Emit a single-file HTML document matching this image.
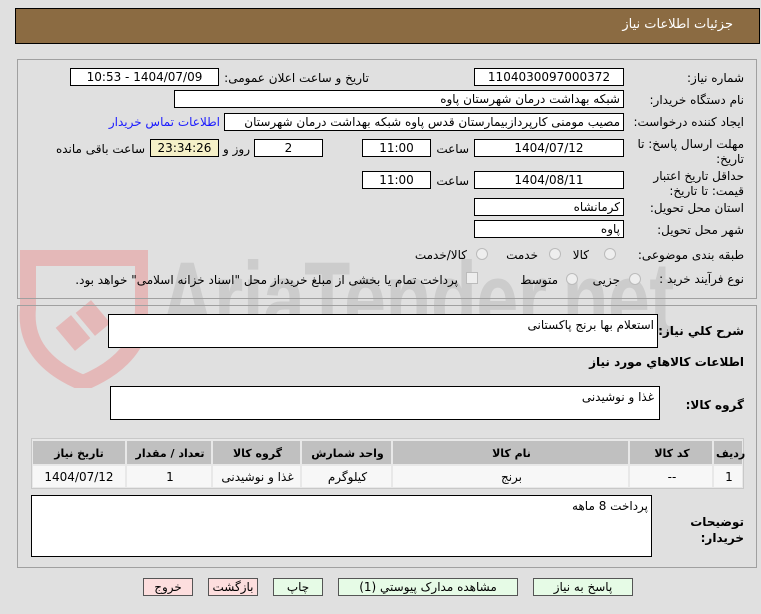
<!DOCTYPE html>
<html><head><meta charset="utf-8"><style>
*{margin:0;padding:0;box-sizing:border-box}
body{width:761px;height:614px;background:#e0e0e0;font-family:"DejaVu Sans","Liberation Sans",sans-serif;font-size:12px;color:#000;position:relative;overflow:hidden}
.a{position:absolute;white-space:nowrap}
.box{position:absolute;background:#fff;border:1px solid #000;height:18px;line-height:16px;text-align:center;direction:rtl}
.lbl{position:absolute;direction:rtl;text-align:right;white-space:nowrap}
.panel{position:absolute;border:1px solid #a0a0a0}
.rad{position:absolute;width:12px;height:12px;border:1px solid #bbb;border-radius:50%;background:#eee}
.btn{position:absolute;height:18px;border:1px solid #555;text-align:center;line-height:16px;direction:rtl}
.b{font-weight:bold;font-size:12px}
</style></head><body>
<svg class="a" style="left:18px;top:248px" width="130" height="140" viewBox="0 0 130 140">
<path d="M10 10 L125 10 L125 60 Q125 110 65 135 Q5 110 10 60 Z" fill="none" stroke="#e4b8b8" stroke-width="16"/>
<rect x="45" y="70" width="20" height="30" fill="#e4b8b8" transform="rotate(-40 55 85)"/>
<rect x="65" y="55" width="20" height="30" fill="#e4b8b8" transform="rotate(-40 75 70)"/>
</svg>
<div class="a" style="left:160px;top:240px;font-size:105px;font-weight:bold;color:#cccccc;font-family:'Liberation Sans',sans-serif;transform:scaleX(0.72);transform-origin:left top;letter-spacing:-1px">AriaTender.net</div>

<div class="a" style="left:15px;top:8px;width:745px;height:36px;background:#8b6b42;border:1px solid #000"></div>
<div class="lbl" style="right:28px;top:17px;color:#fff;font-size:13px">جزئیات اطلاعات نیاز</div>

<div class="panel" style="left:17px;top:59px;width:740px;height:240px"></div>
<div class="panel" style="left:17px;top:305px;width:740px;height:263px"></div>

<div class="lbl" style="right:17px;top:71px">شماره نیاز:</div>
<div class="box" style="left:474px;top:68px;width:150px">1104030097000372</div>
<div class="lbl" style="right:392px;top:71px">تاریخ و ساعت اعلان عمومی:</div>
<div class="box" style="left:70px;top:68px;width:149px">1404/07/09 - 10:53</div>

<div class="lbl" style="right:17px;top:93px">نام دستگاه خریدار:</div>
<div class="box" style="left:174px;top:90px;width:450px;text-align:right;padding-right:3px">شبکه بهداشت درمان شهرستان پاوه</div>

<div class="lbl" style="right:17px;top:115px">ایجاد کننده درخواست:</div>
<div class="box" style="left:224px;top:113px;width:400px;text-align:right;padding-right:3px;overflow:hidden">مصیب مومنی کارپردازبیمارستان قدس پاوه شبکه بهداشت درمان شهرستان پاوه</div>
<div class="lbl" style="right:541px;top:115px;color:#1a1aff">اطلاعات تماس خریدار</div>

<div class="lbl" style="right:17px;top:137px;line-height:15px">مهلت ارسال پاسخ: تا<br>تاریخ:</div>
<div class="box" style="left:474px;top:139px;width:150px">1404/07/12</div>
<div class="lbl" style="right:292px;top:142px">ساعت</div>
<div class="box" style="left:362px;top:139px;width:69px">11:00</div>
<div class="box" style="left:254px;top:139px;width:69px">2</div>
<div class="lbl" style="right:511px;top:142px">روز و</div>
<div class="box" style="left:150px;top:139px;width:69px;background:#f5f0c8">23:34:26</div>
<div class="lbl" style="right:616px;top:142px">ساعت باقی مانده</div>

<div class="lbl" style="right:17px;top:169px;line-height:15px">حداقل تاریخ اعتبار<br>قیمت: تا تاریخ:</div>
<div class="box" style="left:474px;top:171px;width:150px">1404/08/11</div>
<div class="lbl" style="right:292px;top:174px">ساعت</div>
<div class="box" style="left:362px;top:171px;width:69px">11:00</div>

<div class="lbl" style="right:17px;top:201px">استان محل تحویل:</div>
<div class="box" style="left:474px;top:198px;width:150px;text-align:right;padding-right:3px">کرمانشاه</div>
<div class="lbl" style="right:17px;top:223px">شهر محل تحویل:</div>
<div class="box" style="left:474px;top:220px;width:150px;text-align:right;padding-right:3px">پاوه</div>

<div class="lbl" style="right:17px;top:248px">طبقه بندی موضوعی:</div>
<div class="rad" style="left:604px;top:248px"></div><div class="lbl" style="right:172px;top:248px">کالا</div>
<div class="rad" style="left:549px;top:248px"></div><div class="lbl" style="right:223px;top:248px">خدمت</div>
<div class="rad" style="left:476px;top:248px"></div><div class="lbl" style="right:294px;top:248px">کالا/خدمت</div>

<div class="lbl" style="right:17px;top:272px">نوع فرآیند خرید :</div>
<div class="rad" style="left:629px;top:273px"></div><div class="lbl" style="right:141px;top:273px">جزیی</div>
<div class="rad" style="left:566px;top:273px"></div><div class="lbl" style="right:203px;top:273px">متوسط</div>
<div class="a" style="left:466px;top:272px;width:12px;height:12px;border:1px solid #bbb;background:#eee"></div>
<div class="lbl" style="right:303px;top:273px">پرداخت تمام یا بخشی از مبلغ خرید،از محل "اسناد خزانه اسلامی" خواهد بود.</div>

<div class="lbl b" style="right:17px;top:324px">شرح کلي نياز:</div>
<div class="box" style="left:108px;top:314px;width:550px;height:34px;text-align:right;padding:2px 3px">استعلام بها برنج پاکستانی</div>
<div class="lbl b" style="right:17px;top:355px">اطلاعات کالاهاي مورد نياز</div>
<div class="lbl b" style="right:17px;top:398px">گروه کالا:</div>
<div class="box" style="left:110px;top:386px;width:550px;height:34px;text-align:right;padding:2px 5px">غذا و نوشیدنی</div>

<div class="a" style="left:31px;top:438px;width:713px;height:51px;border:1px solid #c8c8c8;background:#e8e8e8"></div>
<div class="a" style="left:33px;top:441px;width:709px;height:46px;direction:rtl">
<div class="a" style="right:0;top:0;width:28px;height:23px;background:#c0c0c0"></div>
<div class="a" style="right:30px;top:0;width:82px;height:23px;background:#c0c0c0"></div>
<div class="a" style="right:114px;top:0;width:235px;height:23px;background:#c0c0c0"></div>
<div class="a" style="right:351px;top:0;width:89px;height:23px;background:#c0c0c0"></div>
<div class="a" style="right:442px;top:0;width:87px;height:23px;background:#c0c0c0"></div>
<div class="a" style="right:531px;top:0;width:84px;height:23px;background:#c0c0c0"></div>
<div class="a" style="right:617px;top:0;width:92px;height:23px;background:#c0c0c0"></div>
<div class="a" style="right:0;top:25px;width:28px;height:21px;background:#f7f7f7"></div>
<div class="a" style="right:30px;top:25px;width:82px;height:21px;background:#f7f7f7"></div>
<div class="a" style="right:114px;top:25px;width:235px;height:21px;background:#f7f7f7"></div>
<div class="a" style="right:351px;top:25px;width:89px;height:21px;background:#f7f7f7"></div>
<div class="a" style="right:442px;top:25px;width:87px;height:21px;background:#f7f7f7"></div>
<div class="a" style="right:531px;top:25px;width:84px;height:21px;background:#f7f7f7"></div>
<div class="a" style="right:617px;top:25px;width:92px;height:21px;background:#f7f7f7"></div>
</div>
<div style="font-weight:bold;font-size:11px">
<div class="a" style="left:716px;top:447px;width:26px;text-align:center">ردیف</div>
<div class="a" style="left:631px;top:447px;width:82px;text-align:center">کد کالا</div>
<div class="a" style="left:394px;top:447px;width:235px;text-align:center">نام کالا</div>
<div class="a" style="left:303px;top:447px;width:89px;text-align:center">واحد شمارش</div>
<div class="a" style="left:214px;top:447px;width:87px;text-align:center">گروه کالا</div>
<div class="a" style="left:128px;top:447px;width:84px;text-align:center">تعداد / مقدار</div>
<div class="a" style="left:33px;top:447px;width:92px;text-align:center">تاریخ نیاز</div>
</div>
<div class="a" style="left:716px;top:470px;width:26px;text-align:center">1</div>
<div class="a" style="left:631px;top:470px;width:82px;text-align:center">--</div>
<div class="a" style="left:394px;top:470px;width:235px;text-align:center">برنج</div>
<div class="a" style="left:303px;top:470px;width:89px;text-align:center">کیلوگرم</div>
<div class="a" style="left:214px;top:470px;width:87px;text-align:center">غذا و نوشیدنی</div>
<div class="a" style="left:128px;top:470px;width:84px;text-align:center">1</div>
<div class="a" style="left:33px;top:470px;width:92px;text-align:center">1404/07/12</div>

<div class="lbl b" style="right:17px;top:514px;line-height:16px">توضیحات<br>خریدار:</div>
<div class="box" style="left:31px;top:495px;width:621px;height:62px;text-align:right;padding:2px 3px">پرداخت 8 ماهه</div>

<div class="btn" style="left:533px;top:578px;width:100px;background:#e6fbe6">پاسخ به نیاز</div>
<div class="btn" style="left:338px;top:578px;width:180px;background:#e6fbe6">مشاهده مدارک پیوستي (1)</div>
<div class="btn" style="left:273px;top:578px;width:50px;background:#e6fbe6">چاپ</div>
<div class="btn" style="left:208px;top:578px;width:50px;background:#fddede">بازگشت</div>
<div class="btn" style="left:143px;top:578px;width:50px;background:#fddede">خروج</div>
</body></html>
